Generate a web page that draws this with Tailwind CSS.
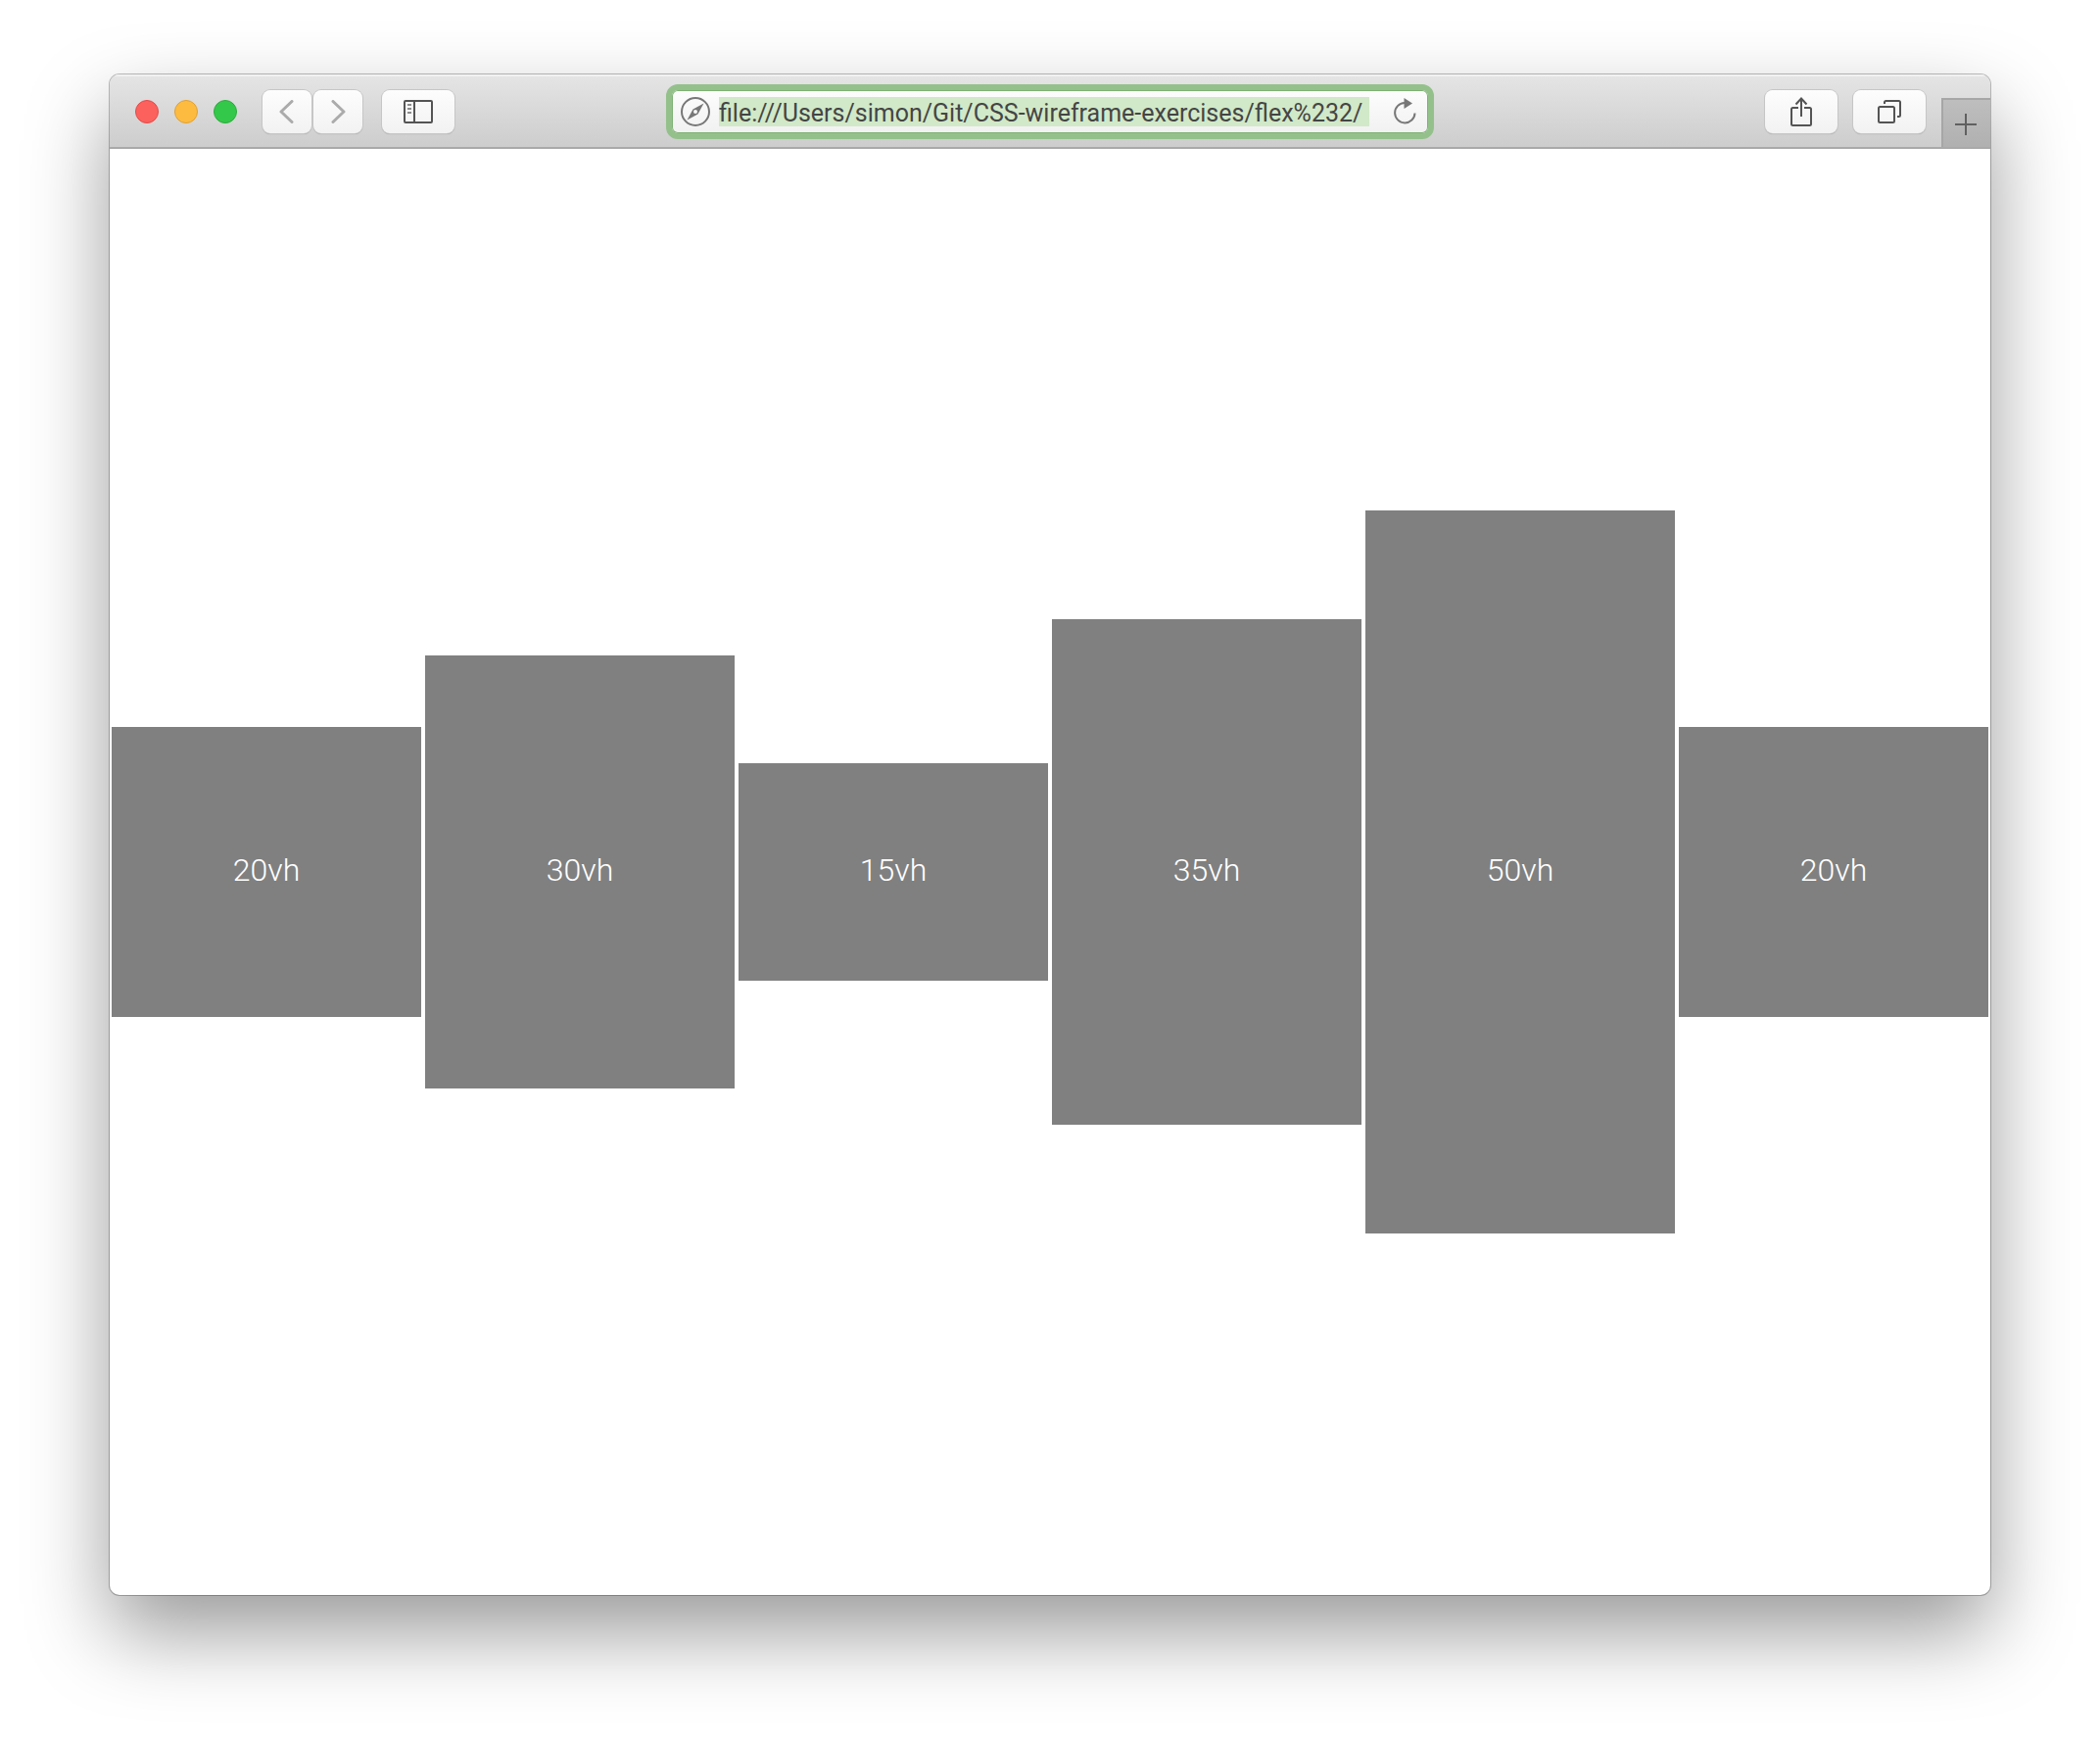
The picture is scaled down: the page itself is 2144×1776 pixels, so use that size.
<!DOCTYPE html>
<html lang="en">
<head>
<meta charset="utf-8">
<title>Flex exercise 2</title>
<script src="https://cdn.jsdelivr.net/npm/@tailwindcss/browser@4"></script>
</head>
<body class="flex h-screen flex-col bg-white px-28 pt-[76px] pb-[148px] font-['Roboto',sans-serif]">
  <div class="flex min-h-0 flex-1 flex-col overflow-hidden rounded-[10px] bg-white shadow-[0_0_0_1px_rgba(0,0,0,0.25),0_38px_84px_rgba(0,0,0,0.4)]">
    <header class="grid h-[76px] shrink-0 grid-cols-[1fr_minmax(0,784px)_1fr] items-center border-b-2 border-[#a9a9a9] bg-linear-to-b from-[#e5e5e5] to-[#cdcdcd] pt-0.5 shadow-[inset_0_2px_0_#f1f1f1]">
      <div class="flex items-center pl-[26px]">
        <div class="flex gap-4">
          <button aria-label="Close" class="size-6 rounded-full border border-[#e24b48] bg-[#fc615d]"></button>
          <button aria-label="Minimize" class="size-6 rounded-full border border-[#dfa033] bg-[#fdbc40]"></button>
          <button aria-label="Zoom" class="size-6 rounded-full border border-[#2dab3e] bg-[#34c84a]"></button>
        </div>
        <nav class="ml-[26px] flex gap-0.5">
          <button aria-label="Back" class="flex h-11 w-[50px] items-center justify-center rounded-lg bg-linear-to-b from-[#fdfdfd] to-[#f2f2f2] shadow-[0_0_0_1px_#c6c6c6,0_1px_1px_#999]">
            <svg class="h-6 w-4" viewBox="0 0 16 24" fill="none" stroke="#ababab" stroke-width="3" stroke-linecap="round" stroke-linejoin="round"><path d="M13 1.5 2 12l11 10.500"/></svg>
          </button>
          <button aria-label="Forward" class="flex h-11 w-[50px] items-center justify-center rounded-lg bg-linear-to-b from-[#fdfdfd] to-[#f2f2f2] shadow-[0_0_0_1px_#c6c6c6,0_1px_1px_#999]">
            <svg class="h-6 w-4" viewBox="0 0 16 24" fill="none" stroke="#ababab" stroke-width="3" stroke-linecap="round" stroke-linejoin="round"><path d="M3 1.500 14 12 3 22.500"/></svg>
          </button>
        </nav>
        <button aria-label="Show sidebar" class="ml-5 flex h-11 w-[74px] items-center justify-center rounded-lg bg-linear-to-b from-[#fdfdfd] to-[#f2f2f2] shadow-[0_0_0_1px_#c6c6c6,0_1px_1px_#999]">
          <svg class="h-6 w-[30px]" viewBox="0 0 30 24" fill="none" stroke="#545454" stroke-width="2"><rect x="1" y="1" width="28" height="22" rx="1"/><path d="M11 1v22"/><path d="M4 5h4M4 9h4M4 13h4" stroke="#8c8c8c"/></svg>
        </button>
      </div>

      <div class="flex h-14 items-center rounded-xl border-[6px] border-[#94c18b] bg-linear-to-b from-[#fdfdfd] to-[#f1f1f1] pr-[12px] pl-[9px] shadow-[inset_0_0_0_1px_#7eb273]">
        <svg class="size-[30px] shrink-0" viewBox="0 0 30 30" fill="none" stroke="#777"><circle cx="15" cy="15" r="14" stroke-width="2"/><path d="M23.500 6.500 17.500 17.500 6.500 23.500 12.500 12.500Z" fill="#777" stroke="none"/><circle cx="15" cy="15" r="2" fill="#f7f7f7" stroke="none"/></svg>
        <input aria-label="Address" type="text" value="file:///Users/simon/Git/CSS-wireframe-exercises/flex%232/" class="ml-[9px] h-[30px] w-[664px] min-w-0 bg-[#d1e9c8] pt-0.5 text-[25px]/[28px] text-[#454545] outline-none">
        <button aria-label="Reload" class="ml-auto flex h-8 w-6 shrink-0 items-center justify-center">
          <svg class="h-7 w-6" viewBox="0 0 24 28" fill="none" stroke="#777" stroke-width="2"><path d="M12 5A10.200 10.200 0 1 0 22.500 15.500"/><path d="M11.500 0v11L20 5.500Z" fill="#777" stroke="none"/></svg>
        </button>
      </div>

      <div class="flex items-center justify-end self-stretch">
        <button aria-label="Share" class="flex h-11 w-[74px] items-center justify-center rounded-lg bg-linear-to-b from-[#fdfdfd] to-[#f2f2f2] shadow-[0_0_0_1px_#c6c6c6,0_1px_1px_#999]">
          <svg class="h-[30px] w-[22px]" viewBox="0 0 22 30" fill="none" stroke="#545454" stroke-width="2"><path d="M8 11H2.500Q1 11 1 12.500V27.500Q1 29 2.500 29H19.500Q21 29 21 27.500V12.500Q21 11 19.500 11H14M11 20V2M5.500 7.500 11 1.500l5.500 6"/></svg>
        </button>
        <button aria-label="Show all tabs" class="ml-4 flex h-11 w-[74px] items-center justify-center rounded-lg bg-linear-to-b from-[#fdfdfd] to-[#f2f2f2] shadow-[0_0_0_1px_#c6c6c6,0_1px_1px_#999]">
          <svg class="size-6" viewBox="0 0 24 24" fill="none" stroke="#545454" stroke-width="2"><rect x="1" y="7" width="16" height="16" rx="1.500"/><path d="M7 4V2.500Q7 1 8.500 1H21.500Q23 1 23 2.500V15.500Q23 17 21.500 17H20"/></svg>
        </button>
        <button aria-label="New tab" class="ml-4 flex h-[50px] w-[50px] items-center justify-center self-end border-t-2 border-l-2 border-[#a6a6a6] bg-linear-to-b from-[#bebebe] to-[#b0b0b0] pt-0.5 pr-0.5">
          <svg class="size-[22px]" viewBox="0 0 22 22" stroke="#606060" stroke-width="2"><path d="M11 0v22M0 11h22"/></svg>
        </button>
      </div>
    </header>

    <main class="flex min-h-0 flex-1 items-center text-[32px]/[38px] font-light text-white">
      <div class="mx-0.5 flex h-[20%] flex-1 items-center justify-center bg-[#808080] pb-1">20vh</div>
      <div class="mx-0.5 flex h-[30%] flex-1 items-center justify-center bg-[#808080] pb-1">30vh</div>
      <div class="mx-0.5 flex h-[15%] flex-1 items-center justify-center bg-[#808080] pb-1">15vh</div>
      <div class="mx-0.5 flex h-[35%] flex-1 items-center justify-center bg-[#808080] pb-1">35vh</div>
      <div class="mx-0.5 flex h-[50%] flex-1 items-center justify-center bg-[#808080] pb-1">50vh</div>
      <div class="mx-0.5 flex h-[20%] flex-1 items-center justify-center bg-[#808080] pb-1">20vh</div>
    </main>
  </div>
</body>
</html>
